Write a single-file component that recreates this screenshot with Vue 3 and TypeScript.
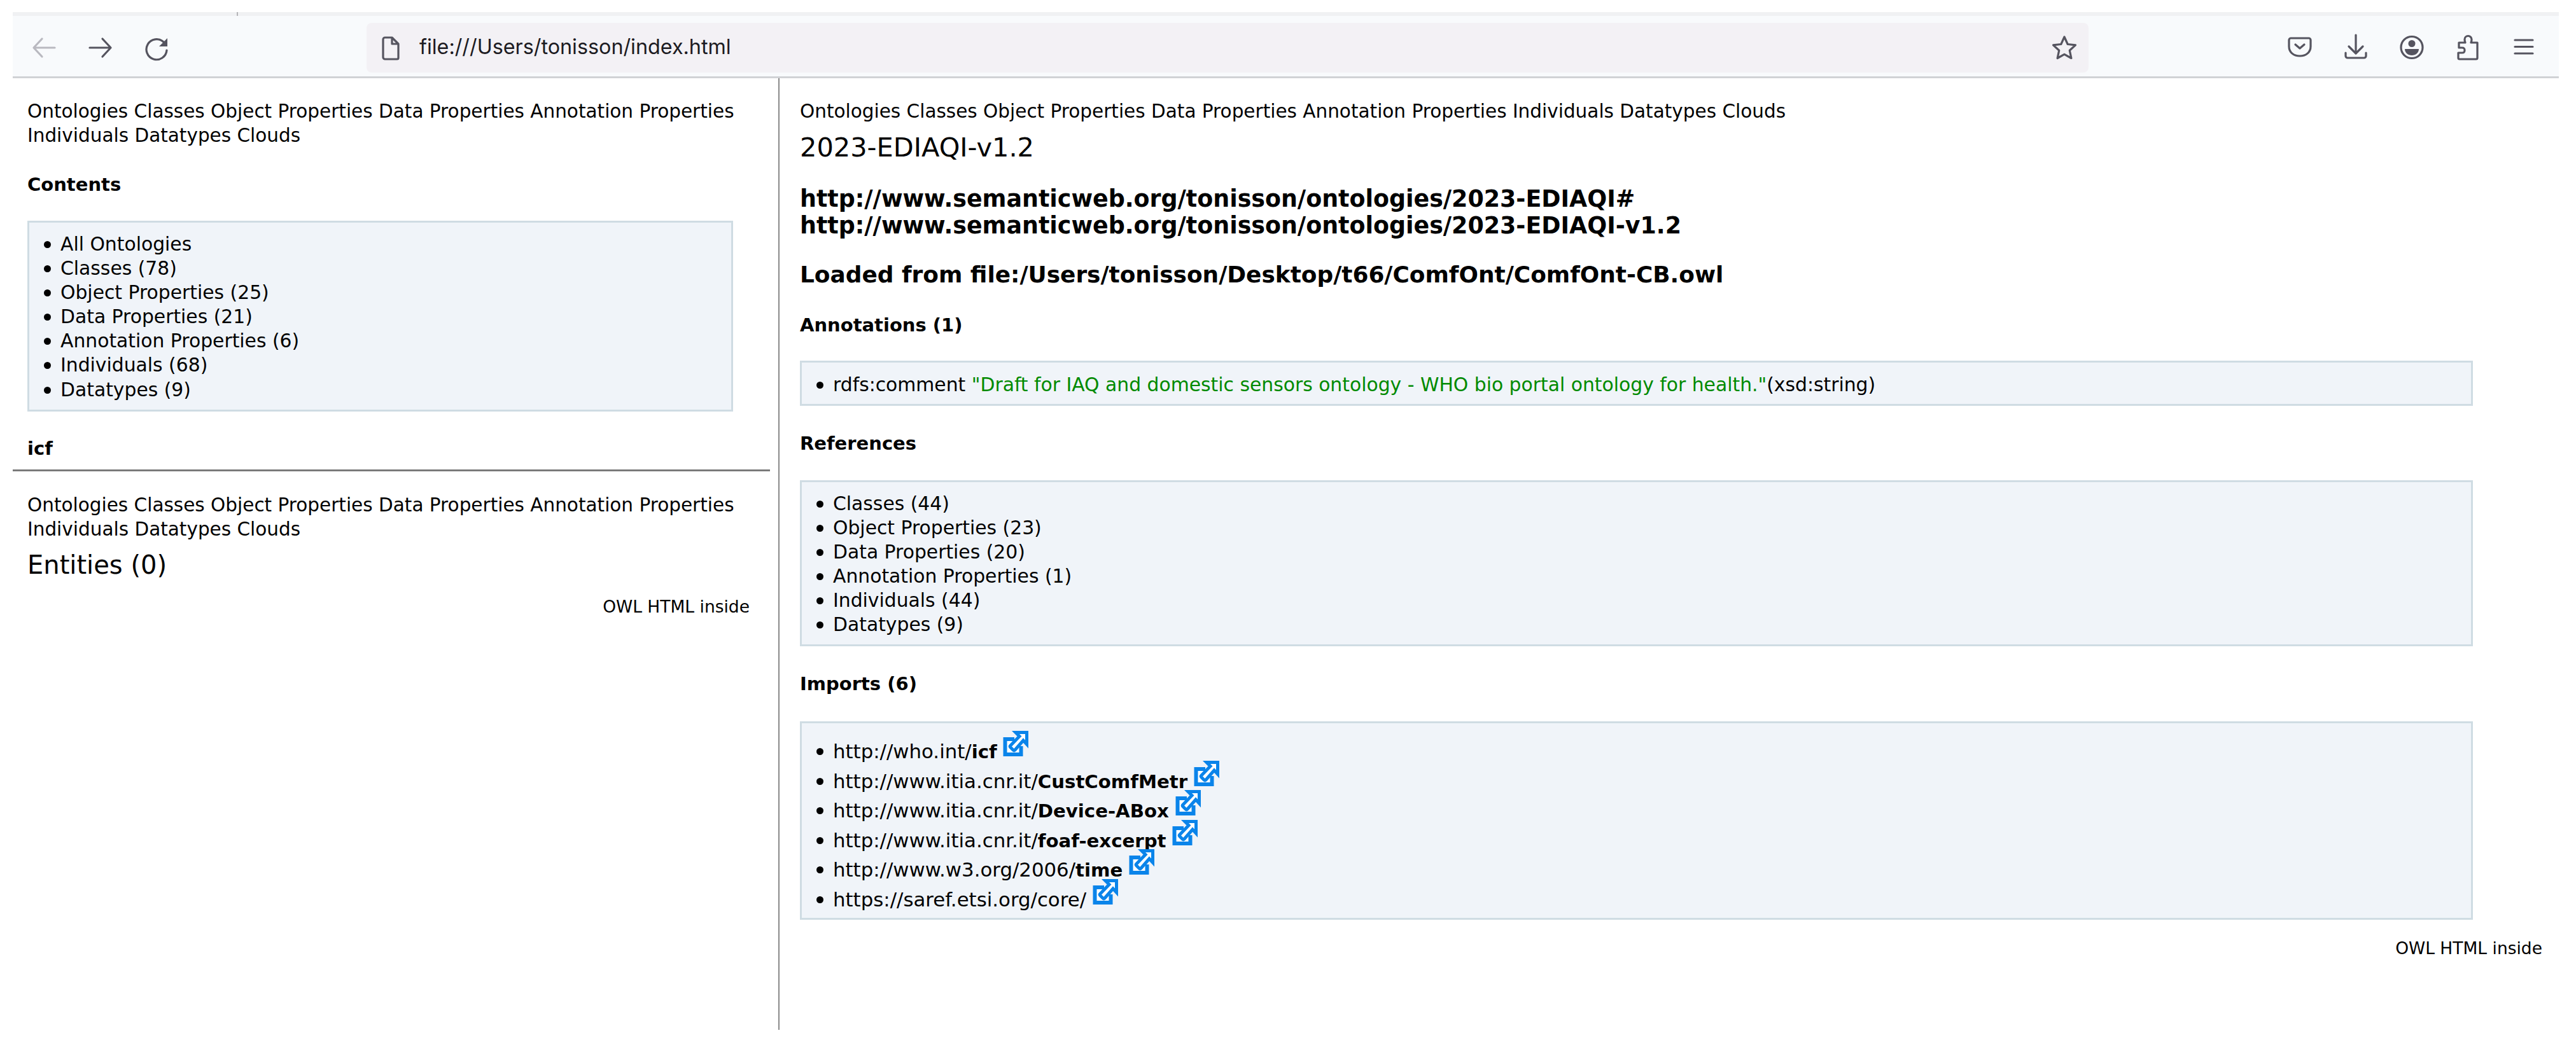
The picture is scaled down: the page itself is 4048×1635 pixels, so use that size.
<script setup lang="ts">
const navText: string = ['Ontologies', 'Classes', 'Object Properties', 'Data Properties', 'Annotation Properties', 'Individuals', 'Datatypes', 'Clouds'].join(' ')
const contents: string[] = ['All Ontologies', 'Classes (78)', 'Object Properties (25)', 'Data Properties (21)', 'Annotation Properties (6)', 'Individuals (68)', 'Datatypes (9)']
const references: string[] = ['Classes (44)', 'Object Properties (23)', 'Data Properties (20)', 'Annotation Properties (1)', 'Individuals (44)', 'Datatypes (9)']
const imports: { base: string; name: string }[] = [
  { base: 'http://who.int/', name: 'icf' },
  { base: 'http://www.itia.cnr.it/', name: 'CustComfMetr' },
  { base: 'http://www.itia.cnr.it/', name: 'Device-ABox' },
  { base: 'http://www.itia.cnr.it/', name: 'foaf-excerpt' },
  { base: 'http://www.w3.org/2006/', name: 'time' },
  { base: 'https://saref.etsi.org/core/', name: '' },
]
</script>

<template>
  <div class="page">
    <header class="toolbar">
      <span class="tick"></span>
      <div class="nav-icons">
        <svg class="icon faded" viewBox="0 0 40 40"><path d="M36 20H4M16 6 3 20l13 14" /></svg>
        <svg class="icon" viewBox="0 0 40 40"><path d="M3 20h33M23 6l13 14-13 14" /></svg>
        <svg class="icon" viewBox="0 0 40 40"><path d="M31 11A16 16 0 1 0 36 24" /><path class="solid" d="M37 5v13H24z" /></svg>
      </div>
      <div class="address">
        <svg class="icon file" viewBox="0 0 40 40"><path d="M8 7a3 3 0 0 1 3-3h11l10 10v22a2 2 0 0 1-2 2H11a3 3 0 0 1-3-3zM22 4v10h10" /></svg>
        <span class="url">file:///Users/tonisson/index.html</span>
        <svg class="icon star" viewBox="0 0 40 40"><path d="M20 3l5.200 11.500 12.300 1.400-9.200 8.400 2.600 12.200L20 30.300 9.100 36.500l2.600-12.200-9.200-8.400 12.300-1.400z" /></svg>
      </div>
      <div class="tool-icons">
        <svg class="icon" viewBox="0 0 40 40"><path d="M3 8a3 3 0 0 1 3-3h28a3 3 0 0 1 3 3v10c0 9-7 15-17 15S3 27 3 18zM13 15l7 6 7-6" /></svg>
        <svg class="icon" viewBox="0 0 40 40"><path d="M20 0v28M9 18l11 11 11-11M4 28v5a3 3 0 0 0 3 3h26a3 3 0 0 0 3-3v-5" /></svg>
        <svg class="icon" viewBox="0 0 40 40"><circle cx="20" cy="19.500" r="17" /><circle class="solid" cx="20" cy="13.500" r="5.500" /><path class="solid" d="M9 22h22c0 6-5 10-11 10S9 28 9 22z" /></svg>
        <svg class="icon" viewBox="0 0 40 40"><path d="M7 38h26a2 2 0 0 0 2-2V12H25c1-2 1-3 1-5a5.500 5.500 0 0 0-11 0c0 2 0 3 1 5H6v8h5c3 0 4 1 4 4s-1 4-4 4H5v8a2 2 0 0 0 2 2z" /></svg>
        <svg class="icon" viewBox="0 0 40 40"><path d="M6 8h28M6 18.500h28M6 29h28" /></svg>
      </div>
    </header>

    <main class="panes">
      <aside class="left">
        <div class="inner">
          <p class="nav">{{ navText }}</p>
          <h4 class="contents-title">Contents</h4>
          <div class="box contents-box">
            <ul><li v-for="item in contents" :key="item">{{ item }}</li></ul>
          </div>
          <h4 class="icf">icf</h4>
        </div>
        <hr class="rule" />
        <div class="inner">
          <p class="nav second">{{ navText }}</p>
          <h2 class="entities">Entities (0)</h2>
          <p class="inside left-inside">OWL HTML inside</p>
        </div>
      </aside>

      <section class="right">
        <p class="nav">{{ navText }}</p>
        <h1 class="title">2023-EDIAQI-v1.2</h1>
        <h3 class="iris">http://www.semanticweb.org/tonisson/ontologies/2023-EDIAQI#<br />http://www.semanticweb.org/tonisson/ontologies/2023-EDIAQI-v1.2</h3>
        <h3 class="loaded">Loaded from file:/Users/tonisson/Desktop/t66/ComfOnt/ComfOnt-CB.owl</h3>
        <h4 class="section first">Annotations (1)</h4>
        <div class="box wide notes">
          <ul><li>rdfs:comment <span class="literal">"Draft for IAQ and domestic sensors ontology - WHO bio portal ontology for health."</span>(xsd:string)</li></ul>
        </div>
        <h4 class="section">References</h4>
        <div class="box wide refs">
          <ul><li v-for="item in references" :key="item">{{ item }}</li></ul>
        </div>
        <h4 class="section">Imports (6)</h4>
        <div class="box wide imports">
          <ul>
            <li v-for="item in imports" :key="item.base + item.name">
              {{ item.base }}<b>{{ item.name }}</b>{{ ' ' }}<svg class="ext" viewBox="0 0 40 40"><path class="ext-box" d="M18 13H3.500v24h25V24" /><path class="ext-arrow" d="M37.500 2.500H20l6 6L12 23c-1 1-1 2 0 3l4 4c1 1 2 1 3 0L32 15l5.500 6z" /></svg>
            </li>
          </ul>
        </div>
        <p class="inside right-inside">OWL HTML inside</p>
      </section>
    </main>
  </div>
</template>

<style>
html, body { margin: 0; background: #fff; }
</style>

<style scoped>
.page {
  width: 4048px;
  height: 1635px;
  box-sizing: border-box;
  padding-top: 19px;
  font-family: "DejaVu Sans", Verdana, sans-serif;
  font-size: 29.800px;
  line-height: 38.100px;
  color: #000;
  overflow: hidden;
}
.toolbar {
  position: relative;
  display: flex;
  align-items: center;
  box-sizing: border-box;
  height: 104px;
  margin: 0 27px 0 20px;
  padding: 4px 35px 0 30px;
  background: #f8fafc;
  border-top: 6px solid #f0f1f3;
  border-bottom: 3px solid #d0d2d5;
}
.tick {
  position: absolute;
  left: 352px;
  top: -6px;
  width: 2px;
  height: 6px;
  background: #b5b5b8;
}
.icon {
  width: 40px;
  height: 40px;
  flex: none;
  fill: none;
  stroke: #55545f;
  stroke-width: 3.200px;
  stroke-linejoin: round;
  stroke-linecap: round;
  overflow: visible;
}
.icon .solid { fill: #55545f; stroke: none; }
.faded { stroke: #b9b9c0; }
.nav-icons, .tool-icons {
  display: flex;
  align-items: center;
  gap: 48px;
}
.address {
  flex: 1;
  display: flex;
  align-items: center;
  height: 78px;
  margin: 0 312px 0 310px;
  padding: 0 18px;
  background: #f3f1f5;
  border-radius: 8px;
}
.url {
  flex: 1;
  margin-left: 25px;
  font-family: Inter, "Liberation Sans", sans-serif;
  font-size: 32.300px;
  color: #1c1b22;
}
.panes {
  display: flex;
  height: 1496px;
  margin-left: 20px;
}
.left {
  width: 1203px;
  flex: none;
  border-right: 2px solid #8a8a8a;
}
.inner { padding: 0 13px 0 23px; }
.right {
  flex: 1;
  padding: 0 26px 0 32px;
}
p, h1, h2, h3, h4, ul { margin: 0; }
.nav { margin-top: 33px; font-size: 29.500px; line-height: 38px; width: 1130px; }
.right .nav { width: auto; }
.second { margin-top: 34px; }
.contents-title, .section, .icf {
  font-size: 29px;
  font-weight: 700;
  line-height: 38px;
}
.contents-title { margin-top: 39px; }
.box {
  box-sizing: border-box;
  background: #f0f4f9;
  border: 3px solid #cfdce3;
  margin-top: 38px;
}
.box ul {
  list-style: none;
  padding: 15px 0 10px 49px;
}
.box li { position: relative; }
.box li::before {
  content: "";
  position: absolute;
  left: -26px;
  top: 14px;
  width: 11px;
  height: 11px;
  border-radius: 50%;
  background: #000;
}
.contents-box { width: 1109px; height: 300px; }
.icf { margin-top: 39px; }
.rule {
  height: 3px;
  width: 1190px;
  margin: 14px 0 0;
  border: 0;
  background: #7a7a7a;
}
.entities {
  margin-top: 12px;
  font-size: 40px;
  font-weight: 400;
  line-height: 50px;
}
.inside { text-align: right; line-height: 38px; font-size: 26.500px; }
.left-inside { margin-top: 22px; padding-right: 32px; }
.title {
  margin-top: 14px;
  font-size: 41.500px;
  font-weight: 400;
  line-height: 48px;
}
.iris {
  margin-top: 36px;
  font-size: 36.400px;
  font-weight: 700;
  line-height: 42px;
}
.loaded {
  margin-top: 35px;
  font-size: 35.900px;
  font-weight: 700;
  line-height: 42px;
}
.section { margin-top: 40px; }
.section.first { margin-top: 39px; }
.wide { width: 2629px; margin-top: 37px; }
.notes { height: 71px; }
.notes ul { padding-top: 16px; }
.refs { margin-top: 39px; height: 261px; }
.refs ul { padding-top: 15px; }
.imports { margin-top: 40px; height: 312px; }
.imports ul { padding-top: 21px; padding-bottom: 6px; font-size: 30.800px; }
.imports b { font-size: 29.200px; }
.imports li { line-height: 46.500px; height: 46.500px; }
.imports li::before { top: 18px; }
.literal { color: #008a00; }
.ext {
  display: inline-block;
  width: 40px;
  height: 40px;
  margin-top: -12px;
  vertical-align: 3px;
  overflow: visible;
}
.ext-box { fill: #fff; stroke: #0a84ea; stroke-width: 6px; }
.ext-arrow { fill: #fff; stroke: #0a84ea; stroke-width: 5px; stroke-linejoin: miter; }
.right-inside { margin-top: 26px; padding-right: 27px; }
</style>
